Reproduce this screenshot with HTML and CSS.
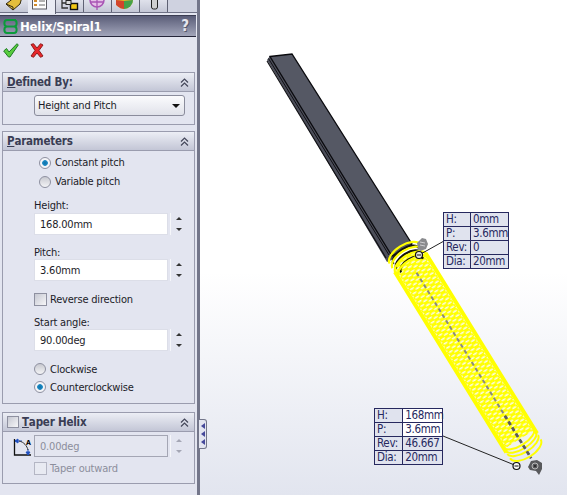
FILE: index.html
```html
<!DOCTYPE html>
<html lang="en">
<head>
    <meta charset="UTF-8">
    <title>Helix/Spiral1</title>
    <link rel="stylesheet" href="styles.css">
</head>
<body>
    <div class="app">
        <div class="panel">
            <div class="tabs">
                <div class="tab"><svg width="24" height="11" viewBox="0 0 24 11"><path d="M6 4 L15 -3 L22 -3 L20 4 L13 10 Z" fill="#e3bd3c" stroke="#33290f"/><path d="M6 4 L13 7 L13 10" fill="none" stroke="#33290f"/></svg></div>
                <div class="tab active"><svg width="16" height="11" viewBox="0 0 16 11"><rect x="0.500" y="-3" width="14" height="12" fill="#fdfdfd" stroke="#5a5a62"/><path d="M2 1h3M2 5h3" stroke="#d08a2c" stroke-width="2"/><path d="M7 1h6M7 5h6" stroke="#666"/></svg></div>
                <div class="tab"><svg width="20" height="11" viewBox="0 0 20 11"><path d="M2 -1V8H8M2 3H8" fill="none" stroke="#333" stroke-width="1.300"/><rect x="10.500" y="3.500" width="7" height="6" fill="#f2c715" stroke="#111" stroke-width="1.400"/><rect x="6" y="0.500" width="5" height="4" fill="#ddd" stroke="#222"/></svg></div>
                <div class="tab"><svg width="20" height="11" viewBox="0 0 20 11"><circle cx="9" cy="0" r="7" fill="#e6bfe8" stroke="#a854b4" stroke-width="1.500"/><path d="M9 -4V10M2 2H16" stroke="#a854b4" stroke-width="1.300"/></svg></div>
                <div class="tab"><svg width="20" height="11" viewBox="0 0 20 11"><circle cx="8" cy="0" r="9" fill="#e3b92c"/><path d="M8 1 L-1 0 A9 9 0 0 0 8 9 Z" fill="#d2452c"/><path d="M8 1 L17 0 A9 9 0 0 1 8 9 Z" fill="#45a14a"/></svg></div>
                <div class="tab tab-tool"><svg width="10" height="11" viewBox="0 0 10 11"><rect x="1.500" y="-3" width="6" height="12" rx="2" fill="#cfcfd0" stroke="#222"/></svg></div>
            </div>

            <div class="title-bar">
                <svg class="title-icon" width="17" height="17" viewBox="0 0 17 17"><path d="M14 2H5C1.500 2 1.500 8.500 5 8.500H12C15.500 8.500 15.500 15 12 15H5C1.500 15 1.500 8.500 5 8.500M12 8.500C15.500 8.500 15.500 2 12 2" fill="none" stroke="#0b9b3a" stroke-width="2"/></svg>
                <span class="title-text">Helix/Spiral1</span>
                <span class="help">?</span>
            </div>

            <div class="actions">
                <svg width="16" height="15" viewBox="0 0 16 15"><path d="M0.700 8 L3.500 5.500 L6 9 L14 0.700 L15.300 2 L7 14 L5.500 14 Z" fill="#58cc3e" stroke="#1f7a26"/></svg>
                <svg width="14" height="15" viewBox="0 0 14 15"><path d="M1 1.500 L3.500 0.700 L7 5 L10.500 0.700 L13 2 L9 7.500 L13 13 L10.500 14.300 L7 10 L3.500 14.300 L1 13 L5 7.500 Z" fill="#e8262a" stroke="#8e1a1a"/></svg>
            </div>

            <section class="group group-defined">
                <div class="group-head"><span class="group-title"><u>D</u>efined By:</span><svg class="chevrons" width="9" height="9" viewBox="0 0 9 9"><path d="M1 4.500 4.500 1 8 4.500M1 8.500 4.500 5 8 8.500" fill="none" stroke="#44475a" stroke-width="1.200"/></svg></div>
                <div class="group-body">
                    <div class="select"><span>Height and Pitch</span><i class="caret"></i></div>
                </div>
            </section>

            <section class="group group-params">
                <div class="group-head"><span class="group-title"><u>P</u>arameters</span><svg class="chevrons" width="9" height="9" viewBox="0 0 9 9"><path d="M1 4.500 4.500 1 8 4.500M1 8.500 4.500 5 8 8.500" fill="none" stroke="#44475a" stroke-width="1.200"/></svg></div>
                <div class="group-body">
                    <div class="option indent"><i class="radio on"></i>Constant pitch</div>
                    <div class="option indent"><i class="radio"></i>Variable pitch</div>
                    <div class="field-label label-height">Height:</div>
                    <div class="field"><div class="input">168.00mm</div><div class="spin"><i class="up"></i><i class="down"></i></div></div>
                    <div class="field-label">Pitch:</div>
                    <div class="field"><div class="input">3.60mm</div><div class="spin"><i class="up"></i><i class="down"></i></div></div>
                    <div class="option check-row"><i class="check"></i>Reverse direction</div>
                    <div class="field-label label-angle">Start angle:</div>
                    <div class="field"><div class="input">90.00deg</div><div class="spin"><i class="up"></i><i class="down"></i></div></div>
                    <div class="option first-dir"><i class="radio"></i>Clockwise</div>
                    <div class="option"><i class="radio on"></i>Counterclockwise</div>
                </div>
            </section>

            <section class="group group-taper">
                <div class="group-head"><span class="group-title"><i class="check head-check"></i><u>T</u>aper Helix</span><svg class="chevrons" width="9" height="9" viewBox="0 0 9 9"><path d="M1 4.500 4.500 1 8 4.500M1 8.500 4.500 5 8 8.500" fill="none" stroke="#44475a" stroke-width="1.200"/></svg></div>
                <div class="group-body">
                    <div class="field disabled">
                        <svg class="angle-icon" width="20" height="21" viewBox="0 0 20 21"><path d="M1.500 3v16H18" fill="none" stroke="#111" stroke-width="1.300"/><path d="M2 5H9M2 5l3-2v4zM15 13v6M15 19l-2-3h4z" fill="#2050c0" stroke="#2050c0"/><path d="M6 5c5 1 8 5 9 9" fill="none" stroke="#333"/><text x="13" y="9" class="angle-letter">A</text></svg>
                        <div class="input">0.00deg</div><div class="spin"><i class="up"></i><i class="down"></i></div>
                    </div>
                    <div class="option check-row disabled"><i class="check"></i>Taper outward</div>
                </div>
            </section>
        </div>

        <div class="viewport">
            <svg class="scene" width="367" height="495" viewBox="200 0 367 495">
                <defs>
                    <pattern id="coils" width="4.920" height="9.800" patternUnits="userSpaceOnUse" y="-4.900">
                        <rect width="4.920" height="9.800" fill="#ffff00"/>
                        <ellipse cx="1.200" cy="2.450" rx="0.850" ry="2.500" fill="#fbfbee"/>
                        <ellipse cx="3.660" cy="7.350" rx="0.850" ry="2.500" fill="#fbfbee"/>
                    </pattern>
                </defs>

                <!-- beam -->
                <path d="M267 60 L270 56 L396 258 L387 262 Z" fill="#4c4e5a"/>
                <path d="M267 61 L386 258" fill="none" stroke="#101014" stroke-width="1.200"/>
                <path d="M268.500 58.500 L389 255" fill="none" stroke="#101014" stroke-width="1"/>
                <path d="M270 56.500 L292 54 L412 244 L392 256 Z" fill="#555864" stroke="#0a0a0e" stroke-width="1.300"/>

                <!-- helix, drawn along its own axis -->
                <g transform="translate(405 254) rotate(58.300)">
                    <path d="M8 -16 H218 V16 H8 a8 16 0 0 1 0 -32 Z" fill="url(#coils)"/>
                    <path d="M218 -18 a9 18 0 0 1 0 36 Z" fill="#f1f2ea"/>
                    <path d="M10 -18 H222 M10 18 H222" stroke="#ffff00" stroke-width="4"/>
                    <g fill="none" stroke="#ffff00" stroke-width="2">
                        <path d="M216 -18 a8 18 0 0 1 0 36"/>
                        <path d="M220 -18 a8 18 0 0 1 0 36"/>
                        <path d="M224 -18 a8 18 0 0 1 0 36"/>
                        <path d="M229 -18 a9 18 0 0 1 0 36"/>
                    </g>
                    <line x1="22" y1="0" x2="240" y2="0" stroke="#8a8a80" stroke-width="2" stroke-dasharray="4 3"/>
                    <line x1="190" y1="0" x2="240" y2="0" stroke="#5c5c5a" stroke-width="2.800" stroke-dasharray="4 3"/>
                    <g fill="none" stroke="#14140a" stroke-width="2.200">
                        <path d="M2.500 -15 a8 15 0 0 0 0 30"/>
                        <path d="M8 -15 a8 15 0 0 0 0 30"/>
                        <path d="M13.500 -13 a7 13 0 0 0 0 26"/>
                    </g>
                    <g fill="none" stroke="#ffff00" stroke-width="2.200">
                        <path d="M0 -18 a9 18 0 0 0 0 36"/>
                        <path d="M5.500 -18 a9 18 0 0 0 0 36"/>
                        <path d="M11 -18 a9 18 0 0 0 0 36"/>
                        <path d="M16.500 -18 a9 18 0 0 0 0 36"/>
                    </g>
                </g>

                <!-- leader lines -->
                <line x1="419" y1="255" x2="444" y2="241" stroke="#222" stroke-width="1"/>
                <line x1="443" y1="436" x2="517" y2="466" stroke="#222" stroke-width="1"/>

                <!-- start and end handles -->
                <path d="M417 243 l5-5 4 1 2 5-2 5-6 2-2-3z" fill="#8a8b8e"/>
                <path d="M420 242 l5 1M420 245 l5 1" stroke="#cfcfd2" stroke-width="1"/>
                <circle cx="419" cy="255" r="3.500" fill="#e8e8e0" stroke="#111" stroke-width="1.200"/>
                <line x1="417" y1="255" x2="421" y2="255" stroke="#111"/>
                <path d="M528 467 l3-6 6-1 5 3 0 6-3 6-3-4-6-1z" fill="#58595c"/>
                <circle cx="535" cy="466" r="3" fill="none" stroke="#bbb"/>
                <circle cx="535" cy="466" r="1" fill="#222"/>
                <circle cx="516.500" cy="466" r="3.500" fill="#f6f6f4" stroke="#111" stroke-width="1.200"/>
                <line x1="514.500" y1="466" x2="518.500" y2="466" stroke="#111"/>
            </svg>

            <table class="callout callout-top">
                <tr><td>H:</td><td>0mm</td></tr>
                <tr><td>P:</td><td>3.6mm</td></tr>
                <tr><td>Rev:</td><td>0</td></tr>
                <tr><td>Dia:</td><td>20mm</td></tr>
            </table>
            <table class="callout callout-end">
                <tr><td>H:</td><td class="editable">168mm</td></tr>
                <tr><td>P:</td><td class="editable">3.6mm</td></tr>
                <tr><td>Rev:</td><td>46.667</td></tr>
                <tr><td>Dia:</td><td>20mm</td></tr>
            </table>

            <div class="flyout"><i></i><i></i><i></i></div>
        </div>
    </div>
</body>
</html>
```

FILE: styles.css
```css
body {
    margin: 0;
    font-family: "DejaVu Sans", sans-serif;
    font-stretch: condensed;
    font-size: 11px;
    letter-spacing: -0.2px;
    color: #1c1c28;
    overflow: hidden;
}

.app {
    display: flex;
    width: 567px;
    height: 495px;
}

.panel {
    width: 200px;
    height: 495px;
    flex: none;
    box-sizing: border-box;
    background-color: #e3e5f0;
    border-right: 3px solid #73768a;
    box-shadow: 1px 0 0 #c9ccd8;
}

.tabs {
    display: flex;
    height: 13px;
    box-sizing: border-box;
    background-color: #cfd2e0;
    border-bottom: 1px solid #6f7286;
}

.tab {
    width: 28px;
    height: 12px;
    overflow: hidden;
    flex: none;
    box-sizing: border-box;
    padding-left: 4px;
    background: linear-gradient(#dfe1eb, #c4c7d6);
    border-right: 1px solid #5f6274;
}

.tab svg {
    display: block;
}

.tab:first-child {
    padding-left: 0;
    border-right: none;
}

.tab.active {
    height: 14px;
    background-color: #e9ebf4;
    background-image: none;
}

.tab-tool {
    padding-left: 10px;
}

.title-bar {
    display: flex;
    align-items: center;
    height: 22px;
    margin-top: 2px;
    padding: 0 7px 0 2px;
    width: 196px;
    box-sizing: border-box;
    background: linear-gradient(#5a5d78, #a2a5ba);
    border-top: 1px solid #3b3d52;
    border-bottom: 1px solid #25263a;
    color: white;
}

.title-icon {
    flex: none;
}

.title-text {
    margin-left: 1px;
    font-size: 13px;
    font-weight: bold;
    flex: 1;
}

.help {
    font-size: 15px;
    font-weight: bold;
    color: #e6e6ee;
    text-shadow: 1px 1px 0 #55586c;
}

.actions {
    display: flex;
    align-items: flex-start;
    gap: 11px;
    height: 35px;
    box-sizing: border-box;
    padding: 6px 0 0 3px;
}

.group {
    width: 193px;
    margin-left: 2px;
    box-sizing: border-box;
    border: 1px solid #9a9cae;
}

.group-defined { height: 53px; }
.group-params { height: 273px; margin-top: 6px; }
.group-taper { height: 72px; margin-top: 8px; }

.group-head {
    display: flex;
    align-items: center;
    justify-content: space-between;
    height: 18px;
    padding: 0 5px 0 4px;
    background: linear-gradient(#eceef5, #c3c6d6);
    border-bottom: 1px solid #9a9cae;
}

.group-title {
    display: flex;
    align-items: center;
    font-size: 11.5px;
    font-weight: bold;
    color: #3a3d54;
}

.group-body {
    padding-left: 31px;
}

.select {
    display: flex;
    align-items: center;
    justify-content: space-between;
    width: 151px;
    height: 21px;
    margin-top: 3px;
    padding: 0 4px 0 3px;
    box-sizing: border-box;
    background: linear-gradient(#fbfbfd, #e0e2ea);
    border: 1px solid #8a8c9c;
    border-radius: 3px;
}

.caret {
    border-left: 4px solid transparent;
    border-right: 4px solid transparent;
    border-top: 4px solid #111;
}

.group-params .group-body {
    padding-top: 2px;
}

.option {
    display: flex;
    align-items: center;
    height: 19px;
}

.indent { margin-left: 5px; }

.first-dir {
    height: 18px;
    margin-top: 9px;
}

.first-dir + .option {
    height: 18px;
}

.check-row {
    height: 18px;
    margin-top: 9px;
}

.radio {
    width: 10px;
    height: 10px;
    margin-right: 4px;
    border: 1px solid #8e90a0;
    border-radius: 50%;
    background: linear-gradient(#c8c9d0, #f4f4f6);
}

.radio.on {
    background: radial-gradient(circle, #0f6fa8 0, #1c8ac4 35%, #f4f4f8 45%);
}

.check {
    width: 11px;
    height: 11px;
    margin-right: 3px;
    border: 1px solid #8e90a0;
    background: linear-gradient(135deg, #c6c8d2, #f6f6f8);
}

.head-check {
    margin: 0 3px 0 0;
    width: 10px;
    height: 10px;
}

.field-label {
    height: 14px;
    margin-top: 9px;
    line-height: 17px;
}

.label-height { margin: 6px 0 2px; }
.label-angle { margin-top: 6px; margin-bottom: 1px; }

.field {
    display: flex;
    align-items: stretch;
    margin-top: 1px;
}

.input {
    width: 134px;
    height: 22px;
    line-height: 22px;
    box-sizing: border-box;
    padding-left: 5px;
    background-color: white;
    border: 1px solid #dcdee8;
}

.spin {
    width: 15px;
    margin-left: 2px;
    display: flex;
    flex-direction: column;
    align-items: center;
    justify-content: center;
    gap: 8px;
    border-left: 1px solid #f5f6fa;
}

.spin i {
    border-left: 3px solid transparent;
    border-right: 3px solid transparent;
}

.spin .up { border-bottom: 3px solid #333; }
.spin .down { border-top: 3px solid #333; }

.group-taper .group-body {
    padding-top: 2px;
}

.field.disabled {
    position: relative;
}

.angle-icon {
    position: absolute;
    left: -21px;
    top: 1px;
}

.angle-letter {
    font-size: 7px;
    font-weight: bold;
}

.disabled .input {
    background-color: #e4e6f0;
    border: 1px solid #a4a6b4;
    color: #8c8e9c;
}

.disabled .spin .up { border-bottom-color: #a4a6b4; }
.disabled .spin .down { border-top-color: #a4a6b4; }

.option.disabled {
    color: #8c8e9c;
    margin-top: 2px;
}

.option.disabled .check {
    border-color: #b4b6c4;
    background: #e8eaf2;
}

.viewport {
    position: relative;
    flex: 1;
    background: linear-gradient(#ffffff 55%, #e2e5ef);
}

.scene {
    display: block;
}

.callout {
    position: absolute;
    table-layout: fixed;
    border-collapse: collapse;
    border: 1px solid #26285e;
    font-size: 11.5px;
    letter-spacing: -0.3px;
    color: #26285e;
    background-color: #e0e3ee;
}

.callout td {
    height: 13px;
    padding: 0 0 0 2px;
    border-top: 1px solid #26285e;
    white-space: nowrap;
    line-height: 13px;
}

.callout td:first-child {
    border-right: 1px solid #26285e;
    width: 24px;
}

.callout td:last-child {
    width: 35px;
}

.callout-top { left: 243px; top: 212px; width: 66px; }
.callout-end { left: 174px; top: 408px; width: 69px; }

.callout .editable {
    background-color: white;
}

.flyout {
    position: absolute;
    left: -1px;
    top: 419px;
    width: 7px;
    height: 28px;
    display: flex;
    flex-direction: column;
    align-items: center;
    justify-content: center;
    gap: 2px;
    background-color: #e3e5f0;
    border: 1px solid #73768a;
    border-left: none;
    border-radius: 0 3px 3px 0;
}

.flyout i {
    border-top: 3px solid transparent;
    border-bottom: 3px solid transparent;
    border-right: 4px solid #45489a;
}
```
